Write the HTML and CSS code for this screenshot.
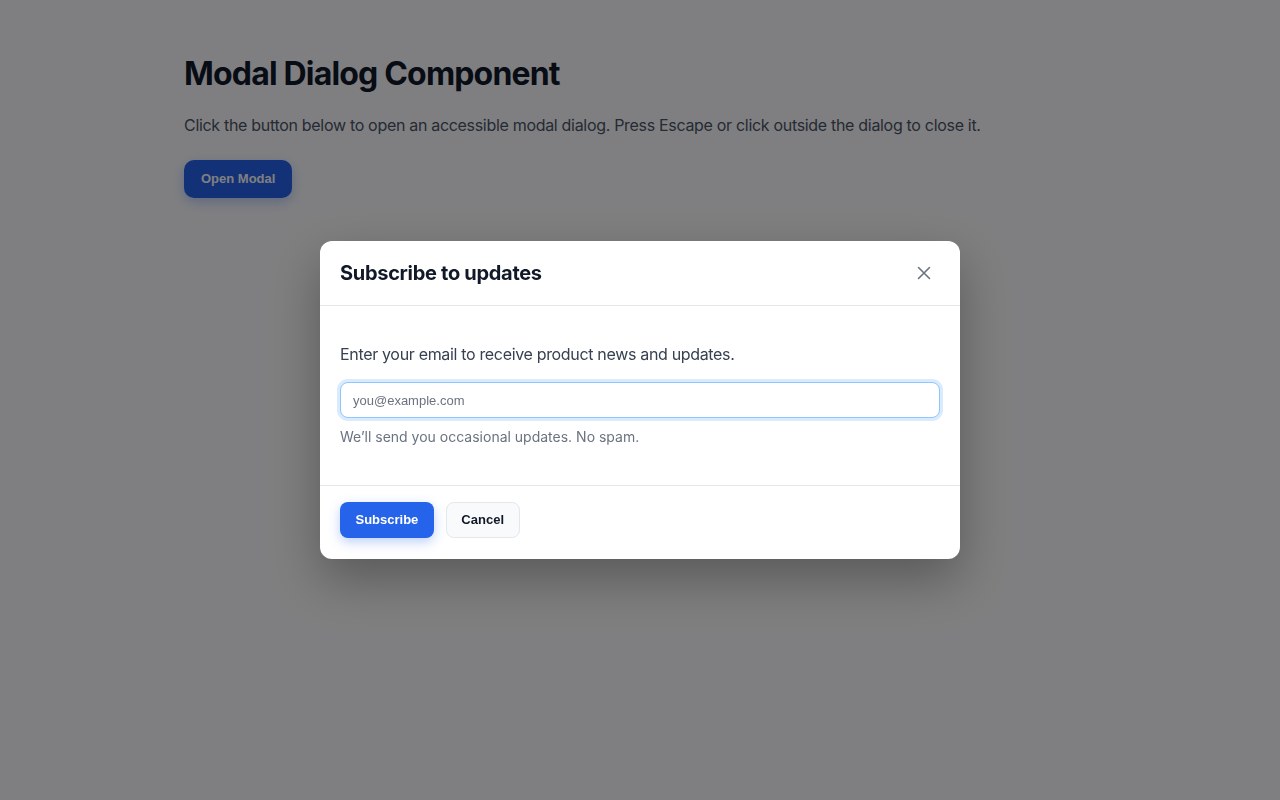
FILE: index.html
```html
<!DOCTYPE html>
<html lang="en">
<head>
<meta charset="utf-8">
<title>Modal Dialog Component</title>
<link rel="stylesheet" href="styles.css">
</head>
<body>
<main class="page">
  <h1 class="page-title">Modal Dialog Component</h1>
  <p class="page-intro">Click the button below to open an accessible modal dialog. Press Escape or click outside the dialog to close it.</p>
  <button class="btn btn-primary btn-open" type="button">Open Modal</button>
</main>

<div class="overlay">
  <div class="modal" role="dialog" aria-modal="true" aria-labelledby="modal-title">
    <header class="modal-header">
      <h2 class="modal-title" id="modal-title">Subscribe to updates</h2>
      <button class="modal-close" type="button" aria-label="Close">
        <svg width="14" height="14" viewBox="0 0 14 14" fill="none" stroke="#6b7280" stroke-width="1.6" stroke-linecap="round"><path d="M1.5 1.5l11 11M12.5 1.5l-11 11"/></svg>
      </button>
    </header>
    <div class="modal-body">
      <p class="modal-text">Enter your email to receive product news and updates.</p>
      <input class="modal-input" type="email" placeholder="you@example.com">
      <p class="modal-help">We’ll send you occasional updates. No spam.</p>
    </div>
    <footer class="modal-footer">
      <button class="btn btn-primary" type="button">Subscribe</button>
      <button class="btn btn-secondary" type="button">Cancel</button>
    </footer>
  </div>
</div>
</body>
</html>
```

FILE: styles.css
```css
* { box-sizing: border-box; }

html, body {
  margin: 0;
  height: 100%;
}

body {
  background: #ffffff;
  font-family: Inter, "Noto Sans", sans-serif;
  color: #111827;
}

.page {
  max-width: 960px;
  margin: 0 auto;
  padding: 55px 24px;
}

.page-title {
  margin: 0 0 20px;
  font-size: 32px;
  line-height: 1.2;
  font-weight: 700;
  color: #111827;
  letter-spacing: -0.82px;
}

.page-intro {
  margin: 0 0 23px;
  font-size: 16px;
  line-height: 24px;
  color: #4b5563;
  letter-spacing: -0.31px;
}

.btn {
  font-family: "Liberation Sans", Arial, sans-serif;
  font-size: 13px;
  font-weight: 700;
  line-height: 16px;
  border: 1px solid transparent;
  border-radius: 8px;
  padding: 9px 14.5px;
  cursor: pointer;
}

.btn-primary {
  background: #2563eb;
  color: #ffffff;
  box-shadow: 0 4px 12px rgba(37, 99, 235, 0.3);
}

.btn-open {
  padding: 10px 16px;
  border-radius: 10px;
}

.btn-secondary {
  background: #f9fafb;
  border-color: #e5e7eb;
  color: #111827;
}

.overlay {
  position: fixed;
  inset: 0;
  background: rgba(0, 0, 3, 0.5);
  display: flex;
  align-items: center;
  justify-content: center;
}

.modal {
  width: 640px;
  background: #ffffff;
  border-radius: 12px;
  box-shadow: 0 20px 50px rgba(0, 0, 0, 0.3);
  overflow: hidden;
}

.modal-header {
  display: flex;
  align-items: center;
  justify-content: space-between;
  padding: 16px 20px;
  border-bottom: 1px solid #e5e7eb;
}

.modal-title {
  margin: 0;
  font-size: 20px;
  line-height: 32px;
  font-weight: 700;
  color: #111827;
  letter-spacing: -0.3px;
}

.modal-close {
  width: 32px;
  height: 32px;
  border: 0;
  background: transparent;
  border-radius: 6px;
  display: flex;
  align-items: center;
  justify-content: center;
  padding: 0;
  cursor: pointer;
}

.modal-body {
  padding: 20px 20px;
}

.modal-text {
  margin: 16px 0;
  font-size: 16px;
  line-height: 24px;
  color: #374151;
  letter-spacing: -0.33px;
}

.modal-input {
  display: block;
  width: 100%;
  height: 36px;
  padding: 0 12px;
  border: 1px solid #93c5fd;
  border-radius: 8px;
  font-family: "Liberation Sans", Arial, sans-serif;
  font-size: 13px;
  color: #111827;
  outline: none;
  box-shadow: 0 0 0 3px rgba(147, 197, 253, 0.35);
}

.modal-input::placeholder {
  color: #6b7280;
}

.modal-help {
  margin: 8px 0 18px;
  font-size: 14px;
  line-height: 21px;
  color: #6b7280;
}

.modal-footer {
  display: flex;
  gap: 12px;
  padding: 16px 20px 21px;
  border-top: 1px solid #e5e7eb;
}
```
